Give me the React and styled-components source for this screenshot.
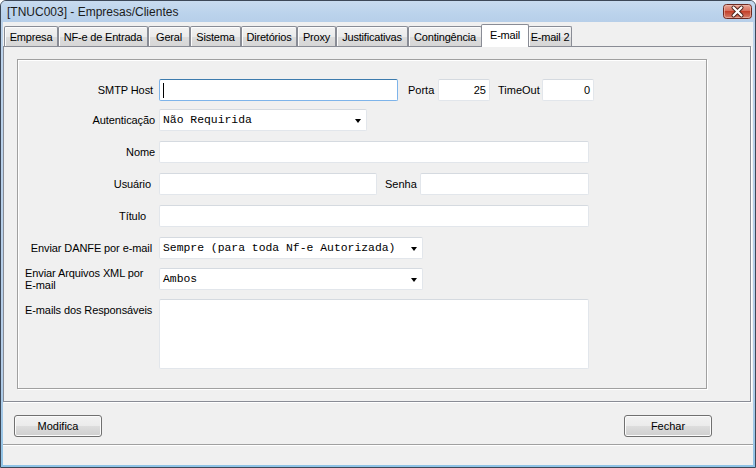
import React from 'react';
import styled, { createGlobalStyle } from 'styled-components';

const GlobalStyle = createGlobalStyle`
  html, body {
    margin: 0;
    padding: 0;
    background: #ffffff;
  }
  * {
    box-sizing: border-box;
  }
`;

const Window = styled.div`
  width: 756px;
  height: 468px;
  display: flex;
  flex-direction: column;
  border: 1px solid #3d4858;
  border-radius: 6px 6px 0 0;
  padding: 0 2px 2px;
  background: linear-gradient(#bcd3eb, #b4cde8 80%, #8fc3e6);
  font-family: "Liberation Sans", Arial, sans-serif;
  font-size: 11px;
  color: #000;
  overflow: hidden;
`;

const TitleBar = styled.div`
  height: 21px;
  flex: none;
  margin: 0 -2px;
  padding: 0 3px 0 6px;
  display: flex;
  align-items: center;
  justify-content: space-between;
  background: linear-gradient(#c8dbef, #bbd3ec 60%, #b7cfe9);
`;

const Caption = styled.span`
  font-size: 12px;
  color: #1b1b1b;
  margin-top: 1px;
`;

const Client = styled.div`
  flex: 1;
  display: flex;
  flex-direction: column;
  background: #f0f0f0;
`;

const TabStrip = styled.div`
  height: 24px;
  flex: none;
  display: flex;
  align-items: flex-end;
  padding-left: 1px;
`;

const Tab = styled.div`
  flex: none;
  position: relative;
  display: flex;
  align-items: center;
  justify-content: center;
  border: 1px solid #898c95;
  border-bottom: none;
  border-radius: 2px 2px 0 0;
  white-space: nowrap;
  letter-spacing: -0.2px;
  height: ${p => (p.$active ? '23px' : '20px')};
  margin: ${p => (p.$active ? '0 -1px -1px' : '0')};
  z-index: ${p => (p.$active ? 2 : 1)};
  padding-bottom: ${p => (p.$active ? '3px' : '0')};
  background: ${p =>
    p.$active
      ? '#ffffff'
      : 'linear-gradient(#f2f2f2, #ebebeb 50%, #dddddd 51%, #d6d6d6)'};
  box-shadow: ${p => (p.$active ? 'none' : 'inset 1px 1px 0 #fcfcfc')};
`;

const TabPanel = styled.div`
  height: 356px;
  flex: none;
  margin-right: 2px;
  border: 1px solid #898c95;
  background: #f0f0f0;
  box-shadow: 1px 1px 0 #ffffff;
  padding: 12px 0 0 13px;
`;

const GroupBox = styled.div`
  width: 690px;
  height: 330px;
  border: 1px solid #a0a0a0;
  box-shadow: 1px 1px 0 #ffffff, inset 1px 1px 0 #ffffff;
  padding-top: 19px;
  display: flex;
  flex-direction: column;
`;

const Row = styled.div`
  display: flex;
  align-items: ${p => (p.$top ? 'flex-start' : 'center')};
  height: ${p => p.$h || 22}px;
  margin-top: ${p => p.$gap || 0}px;
`;

const Label = styled.div`
  width: 141px;
  flex: none;
  line-height: 12px;
  letter-spacing: -0.1px;
  text-align: ${p => (p.$left ? 'left' : 'right')};
  padding-right: ${p => p.$pr || 0}px;
  padding-left: ${p => (p.$left ? 7 : 0)}px;
  padding-top: ${p => p.$pt || 0}px;
`;

const InlineLabel = styled.div`
  width: ${p => p.$w}px;
  flex: none;
  padding-left: ${p => p.$pl}px;
`;

const Field = styled.div`
  width: ${p => p.$w}px;
  height: ${p => p.$h || 22}px;
  flex: none;
  position: relative;
  display: flex;
  align-items: ${p => (p.$area ? 'flex-start' : 'center')};
  justify-content: ${p => (p.$right ? 'flex-end' : 'flex-start')};
  padding: 0 3px;
  background: #ffffff;
  border: 1px solid ${p => (p.$focus ? '#7eb4ea' : '#e2e6eb')};
  border-top-color: ${p => (p.$focus ? '#3d7bad' : '#d5dae0')};
  border-radius: 2px;
`;

const Caret = styled.span`
  width: 1px;
  height: 15px;
  background: #000;
`;

const Select = styled(Field)`
  justify-content: space-between;
  padding: 0 5px 0 3px;
  font-family: "Liberation Mono", "Courier New", monospace;
  font-size: 11.4px;
  white-space: pre;
`;

const Arrow = styled.span`
  width: 0;
  height: 0;
  border-left: 3.5px solid transparent;
  border-right: 3.5px solid transparent;
  border-top: 4px solid #000;
  margin-top: 1px;
`;

const ButtonBar = styled.div`
  height: 42px;
  flex: none;
  display: flex;
  justify-content: space-between;
  align-items: flex-start;
  padding: 13px 41px 0 11px;
`;

const Button = styled.div`
  width: 88px;
  height: 22px;
  display: flex;
  align-items: center;
  justify-content: center;
  border: 1px solid #707070;
  border-radius: 3px;
  background: linear-gradient(#f2f2f2, #ebebeb 50%, #dddddd 51%, #cfcfcf);
  box-shadow: inset 0 0 0 1px #fbfbfb;
`;

const StatusBar = styled.div`
  flex: 1;
  border-top: 1px solid #a0a0a0;
  box-shadow: inset 0 1px 0 #ffffff;
`;

const CloseIcon = () => (
  <svg width="29" height="15" viewBox="0 0 29 15">
    <defs>
      <linearGradient id="cg" x1="0" y1="0" x2="0" y2="1">
        <stop offset="0" stopColor="#e9a99b" />
        <stop offset="0.45" stopColor="#d7705e" />
        <stop offset="0.5" stopColor="#c4412b" />
        <stop offset="1" stopColor="#d5826f" />
      </linearGradient>
    </defs>
    <rect x="0.5" y="0.5" width="28" height="14" rx="3" fill="url(#cg)" stroke="#6e2a22" />
    <rect x="1.5" y="1.5" width="26" height="12" rx="2" fill="none" stroke="#f1c3b8" strokeOpacity="0.6" />
    <path d="M10.5 3.5 L18.5 11.5 M18.5 3.5 L10.5 11.5" stroke="#4a2019" strokeWidth="4" strokeLinecap="round" />
    <path d="M10.5 3.5 L18.5 11.5 M18.5 3.5 L10.5 11.5" stroke="#ffffff" strokeWidth="2.2" strokeLinecap="round" />
  </svg>
);

const tabs = [
  { label: 'Empresa', w: 54 },
  { label: 'NF-e de Entrada', w: 90 },
  { label: 'Geral', w: 42 },
  { label: 'Sistema', w: 51 },
  { label: 'Diretórios', w: 56 },
  { label: 'Proxy', w: 39 },
  { label: 'Justificativas', w: 72 },
  { label: 'Contingência', w: 74 },
  { label: 'E-mail', w: 46, active: true },
  { label: 'E-mail 2', w: 44 },
];

export default function App() {
  return (
    <>
      <GlobalStyle />
      <Window>
        <TitleBar>
          <Caption>[TNUC003] - Empresas/Clientes</Caption>
          <CloseIcon />
        </TitleBar>
        <Client>
          <TabStrip>
            {tabs.map(t => (
              <Tab key={t.label} $active={t.active} style={{ width: t.w + (t.active ? 2 : 0) }}>
                {t.label}
              </Tab>
            ))}
          </TabStrip>
          <TabPanel>
            <GroupBox>
              <Row>
                <Label $pr={6}>SMTP Host</Label>
                <Field $w={239} $focus>
                  <Caret />
                </Field>
                <InlineLabel $w={40} $pl={10}>Porta</InlineLabel>
                <Field $w={52} $right>25</Field>
                <InlineLabel $w={52} $pl={8}>TimeOut</InlineLabel>
                <Field $w={52} $right>0</Field>
              </Row>
              <Row $gap={8}>
                <Label $pr={4}>Autenticação</Label>
                <Select $w={208}>
                  <span>Não Requirida</span>
                  <Arrow />
                </Select>
              </Row>
              <Row $gap={10}>
                <Label $pr={4}>Nome</Label>
                <Field $w={430} />
              </Row>
              <Row $gap={10}>
                <Label $pr={8}>Usuário</Label>
                <Field $w={218} />
                <InlineLabel $w={43} $pl={8}>Senha</InlineLabel>
                <Field $w={169} />
              </Row>
              <Row $gap={10}>
                <Label $pr={13}>Título</Label>
                <Field $w={430} />
              </Row>
              <Row $gap={10}>
                <Label $pr={7}>Enviar DANFE por e-mail</Label>
                <Select $w={264}>
                  <span>Sempre (para toda Nf-e Autorizada)</span>
                  <Arrow />
                </Select>
              </Row>
              <Row $gap={9}>
                <Label $left>
                  Enviar Arquivos XML por
                  <br />
                  E-mail
                </Label>
                <Select $w={264}>
                  <span>Ambos</span>
                  <Arrow />
                </Select>
              </Row>
              <Row $gap={9} $h={70} $top>
                <Label $left $pt={5}>E-mails dos Responsáveis</Label>
                <Field $w={430} $h={70} $area />
              </Row>
            </GroupBox>
          </TabPanel>
          <ButtonBar>
            <Button>Modifica</Button>
            <Button>Fechar</Button>
          </ButtonBar>
          <StatusBar />
        </Client>
      </Window>
    </>
  );
}
